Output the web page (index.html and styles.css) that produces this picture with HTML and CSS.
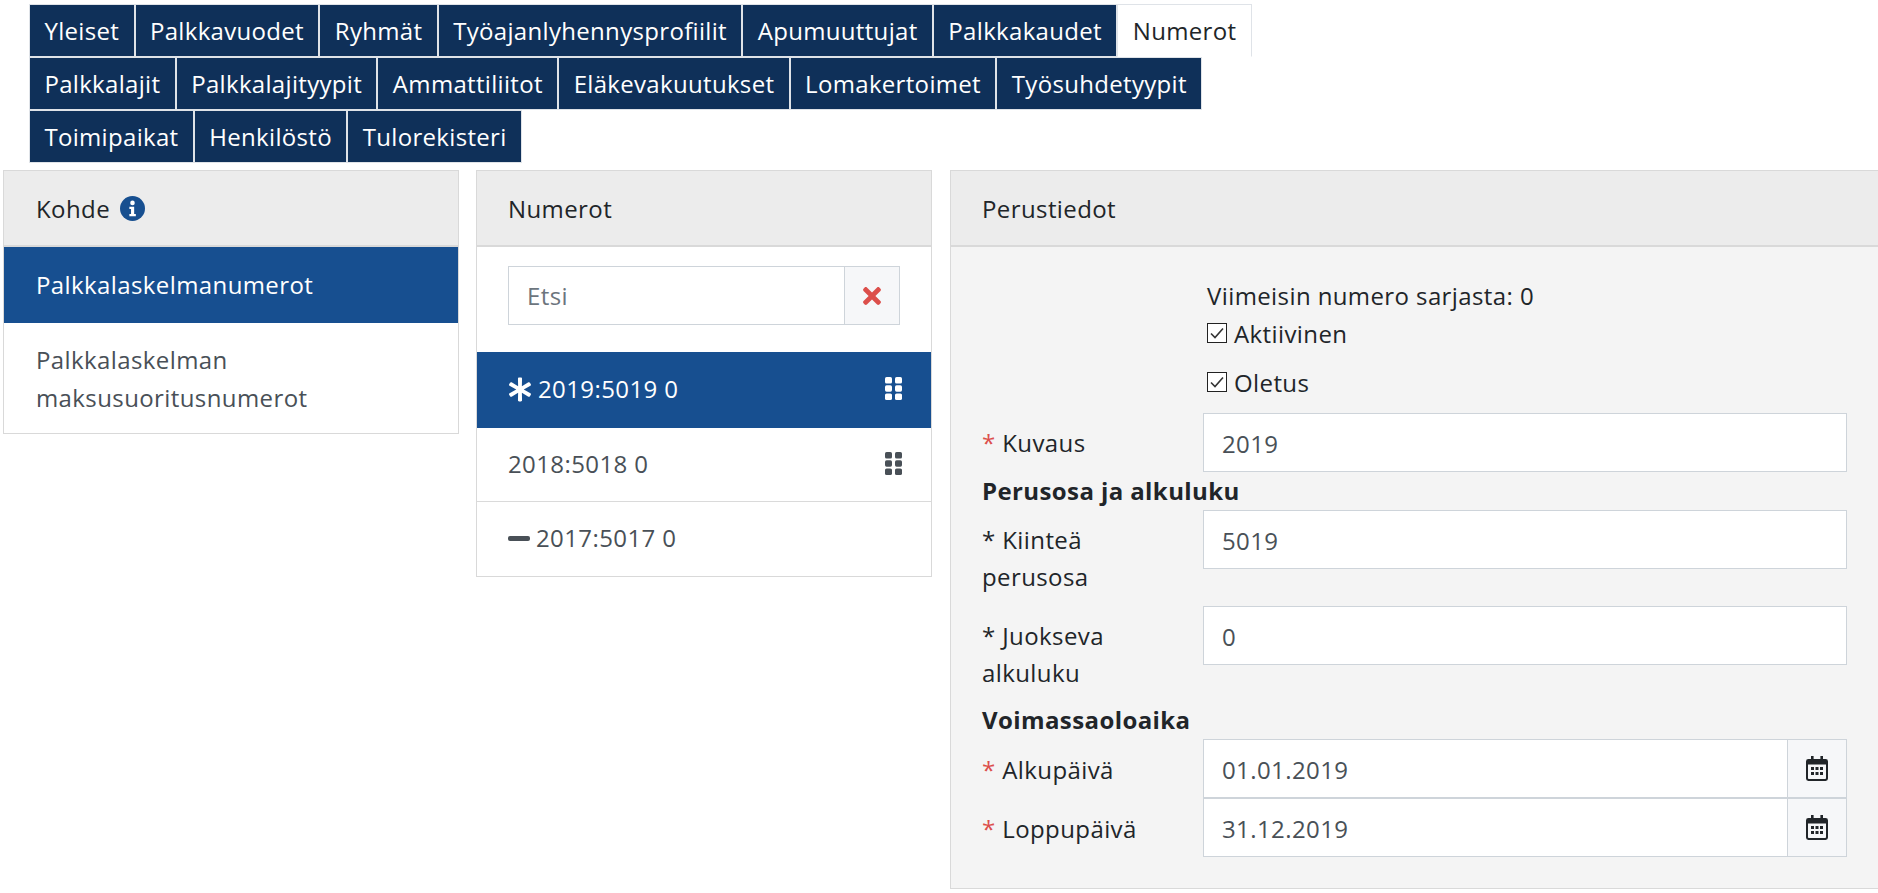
FILE: index.html
```html
<!DOCTYPE html>
<html lang="fi">
<head>
<meta charset="utf-8">
<title>Numerot</title>
<link rel="stylesheet" href="styles.css">
</head>
<body>
<nav class="tabs">
  <a class="tab">Yleiset</a><a class="tab">Palkkavuodet</a><a class="tab">Ryhmät</a><a class="tab">Työajanlyhennysprofiilit</a><a class="tab">Apumuuttujat</a><a class="tab">Palkkakaudet</a><a class="tab active">Numerot</a>
  <a class="tab">Palkkalajit</a><a class="tab">Palkkalajityypit</a><a class="tab">Ammattiliitot</a><a class="tab">Eläkevakuutukset</a><a class="tab">Lomakertoimet</a><a class="tab">Työsuhdetyypit</a>
  <a class="tab">Toimipaikat</a><a class="tab">Henkilöstö</a><a class="tab">Tulorekisteri</a>
</nav>
<main class="columns">
  <section class="panel panel-left">
    <header class="panel-head">Kohde
      <svg class="info" viewBox="0 0 24 24"><circle cx="12" cy="12" r="12" fill="#174f90"/><circle cx="12" cy="6.6" r="2.2" fill="#fff"/><path d="M9 10.2h4.600v7h1.600v2.300H9v-2.300h1.600v-4.700H9z" fill="#fff"/></svg>
    </header>
    <div class="item item-first active">Palkkalaskelmanumerot</div>
    <div class="item item-wrap">Palkkalaskelman maksusuoritusnumerot</div>
  </section>
  <section class="panel panel-mid">
    <header class="panel-head">Numerot</header>
    <div class="search">
      <input class="search-input" type="text" placeholder="Etsi">
      <span class="addon addon-search"><svg class="x" viewBox="0 0 352 512"><path fill="#dc4f4b" d="M242.72 256l100.07-100.07c12.28-12.28 12.28-32.19 0-44.48l-22.24-22.24c-12.28-12.28-32.19-12.28-44.48 0L176 189.28 75.93 89.21c-12.28-12.28-32.19-12.28-44.48 0L9.21 111.45c-12.28 12.28-12.28 32.19 0 44.48L109.28 256 9.21 356.07c-12.28 12.28-12.28 32.19 0 44.48l22.24 22.24c12.28 12.28 32.2 12.28 44.48 0L176 322.72l100.07 100.07c12.28 12.28 32.2 12.28 44.48 0l22.24-22.24c12.28-12.28 12.28-32.19 0-44.48L242.72 256z"/></svg></span>
    </div>
    <div class="row active">
      <svg class="star" viewBox="0 0 512 512"><path fill="#fff" d="M478.21 334.093L336 256l142.21-78.093c11.795-6.477 15.961-21.384 9.232-33.037l-19.48-33.741c-6.728-11.653-21.72-15.499-33.227-8.523L296 186.718l3.475-162.204C299.763 11.061 288.937 0 275.48 0h-38.96c-13.456 0-24.283 11.061-23.994 24.514L216 186.718 77.265 102.607c-11.506-6.976-26.499-3.13-33.227 8.523l-19.48 33.741c-6.728 11.653-2.562 26.56 9.233 33.037L176 256 33.79 334.093c-11.795 6.477-15.961 21.384-9.232 33.037l19.48 33.741c6.728 11.653 21.721 15.499 33.227 8.523L216 325.282l-3.475 162.204C212.237 500.939 223.064 512 236.52 512h38.961c13.456 0 24.283-11.061 23.995-24.514L296 325.282l138.735 84.111c11.506 6.976 26.499 3.13 33.227-8.523l19.48-33.741c6.728-11.653 2.563-26.559-9.232-33.036z"/></svg>
      <span class="row-text">2019:5019 0</span>
      <svg class="grip" viewBox="0 0 17 23"><g fill="#fff"><rect width="7" height="6.5" rx="1.6"/><rect x="10" width="7" height="6.5" rx="1.6"/><rect y="8.2" width="7" height="6.5" rx="1.6"/><rect x="10" y="8.2" width="7" height="6.5" rx="1.6"/><rect y="16.5" width="7" height="6.5" rx="1.6"/><rect x="10" y="16.5" width="7" height="6.5" rx="1.6"/></g></svg>
    </div>
    <div class="row row-line">
      <span class="row-text">2018:5018 0</span>
      <svg class="grip" viewBox="0 0 17 23"><g fill="#495057"><rect width="7" height="6.5" rx="1.6"/><rect x="10" width="7" height="6.5" rx="1.6"/><rect y="8.2" width="7" height="6.5" rx="1.6"/><rect x="10" y="8.2" width="7" height="6.5" rx="1.6"/><rect y="16.5" width="7" height="6.5" rx="1.6"/><rect x="10" y="16.5" width="7" height="6.5" rx="1.6"/></g></svg>
    </div>
    <div class="row">
      <span class="minus"></span>
      <span class="row-text">2017:5017 0</span>
    </div>
  </section>
  <section class="panel panel-right">
    <header class="panel-head">Perustiedot</header>
    <div class="form">
      <div class="field-only last-number">Viimeisin numero sarjasta: 0</div>
      <label class="field-only check check-one"><svg class="box" viewBox="0 0 20 20"><rect x=".5" y=".5" width="19" height="19" fill="#fff" stroke="#222"/><path d="M4 10.500l4 4 8-9" fill="none" stroke="#333" stroke-width="1.6"/></svg>Aktiivinen</label>
      <label class="field-only check check-two"><svg class="box" viewBox="0 0 20 20"><rect x=".5" y=".5" width="19" height="19" fill="#fff" stroke="#222"/><path d="M4 10.500l4 4 8-9" fill="none" stroke="#333" stroke-width="1.6"/></svg>Oletus</label>
      <div class="form-row row-kuvaus"><span class="label"><span class="req">*</span> Kuvaus</span><input class="input" type="text" value="2019"></div>
      <div class="section-title title-one">Perusosa ja alkuluku</div>
      <div class="form-row row-kiintea"><span class="label">* Kiinteä perusosa</span><input class="input" type="text" value="5019"></div>
      <div class="form-row row-juokseva"><span class="label">* Juokseva alkuluku</span><input class="input" type="text" value="0"></div>
      <div class="section-title title-two">Voimassaoloaika</div>
      <div class="form-row row-date"><span class="label"><span class="req">*</span> Alkupäivä</span><div class="group"><input class="input input-group" type="text" value="01.01.2019"><span class="addon addon-date"><svg class="cal" viewBox="0 0 22 25"><path fill="#212529" fill-rule="evenodd" d="M5 0h2.600v3h6.800V0H17v3h2.600A2.400 2.400 0 0 1 22 5.400v17.200a2.400 2.400 0 0 1-2.400 2.400H2.400A2.400 2.400 0 0 1 0 22.600V5.400A2.400 2.400 0 0 1 2.400 3H5zM2 8.500v13.700c0 .5.400.8.800.8h16.400c.4 0 .8-.3.800-.8V8.500zM5 11h3v3H5zm4.500 0h3v3h-3zM14 11h3v3h-3zM5 16h3v3H5zm4.500 0h3v3h-3zM14 16h3v3h-3z"/></svg></span></div></div>
      <div class="form-row row-date"><span class="label"><span class="req">*</span> Loppupäivä</span><div class="group"><input class="input input-group" type="text" value="31.12.2019"><span class="addon addon-date"><svg class="cal" viewBox="0 0 22 25"><path fill="#212529" fill-rule="evenodd" d="M5 0h2.600v3h6.800V0H17v3h2.600A2.400 2.400 0 0 1 22 5.400v17.200a2.400 2.400 0 0 1-2.400 2.400H2.400A2.400 2.400 0 0 1 0 22.600V5.400A2.400 2.400 0 0 1 2.400 3H5zM2 8.500v13.700c0 .5.400.8.800.8h16.400c.4 0 .8-.3.800-.8V8.500zM5 11h3v3H5zm4.500 0h3v3h-3zM14 11h3v3h-3zM5 16h3v3H5zm4.500 0h3v3h-3zM14 16h3v3h-3z"/></svg></span></div></div>
    </div>
  </section>
</main>
</body>
</html>
```
FILE: styles.css
```css
* { box-sizing: border-box; }
html, body { margin: 0; padding: 0; overflow: hidden; }
body {
  height: 893px;
  background: #fff;
  color: #212529;
  font-family: "Open Sans", "Liberation Sans", sans-serif;
  font-size: 24px;
  line-height: 36px;
  letter-spacing: .4px;
}
.tabs {
  display: flex;
  flex-wrap: wrap;
  width: 1300px;
  margin-left: 29px;
  padding-top: 4px;
}
.tab {
  height: 53px;
  padding: 8px 14.4px 0;
  background: #0f3059;
  border: 1px solid #dfe3e8;
  color: #fff;
  letter-spacing: .32px;
}
.tab.active {
  background: #fff;
  color: #212529;
  border-bottom-color: transparent;
}
.columns {
  display: flex;
  align-items: flex-start;
  margin-top: 7px;
  padding-left: 3px;
}
.panel {
  border: 1px solid #d9d9d9;
  background: #fff;
  flex: none;
}
.panel-left { width: 456px; }
.panel-mid { width: 456px; margin-left: 17px; height: 407px; }
.panel-right { width: 928px; margin-left: 18px; border-right: 0; background: #f4f4f4; }
.panel-head {
  height: 76px;
  padding: 20px 31px 0;
  background: #ececec;
  border-bottom: 2px solid #d9d9d9;
  display: flex;
  align-items: flex-start;
}
.panel-left .panel-head { padding-left: 32px; }
.info { width: 25px; height: 25px; margin: 5px 0 0 10px; flex: none; }
.item { padding: 20px 32px 0; color: #495057; }
.item-first { height: 76px; }
.item-wrap { height: 110px; padding-top: 18px; line-height: 38px; }
.active { background: #174f90; color: #fff; }
.search {
  display: flex;
  margin: 19px 31px 27px;
  height: 59px;
}
.search-input, .input {
  display: block;
  font: inherit;
  letter-spacing: inherit;
  color: #495057;
  border: 1px solid #ced4da;
  background: #fff;
  min-width: 0;
  outline: 0;
}
.search-input { flex: 1; border-right: 0; padding: 0 18px; }
.input { padding: 1px 18px 0; }
.search-input::placeholder { color: #6c757d; opacity: 1; }
.addon {
  flex: none;
  display: flex;
  align-items: center;
  justify-content: center;
  background: #f6f7f9;
  border: 1px solid #ced4da;
}
.addon-search { width: 56px; }
.x { width: 18px; height: 26px; }
.row {
  height: 74px;
  padding: 18px 29px 0 31px;
  display: flex;
  align-items: flex-start;
  color: #495057;
}
.row.active { height: 76px; padding-top: 19px; color: #fff; }
.row-line { border-bottom: 1px solid #dadada; }
.star { width: 24px; height: 25px; margin: 6px 6px 0 0; flex: none; }
.minus { width: 22px; height: 5px; background: #495057; border-radius: 2px; margin: 16px 6px 0 0; flex: none; }
.grip { width: 17px; height: 23px; margin: 6px 0 0 auto; flex: none; }
.form { padding: 31px; }
.field-only { margin-left: 225px; display: block; }
.last-number { height: 36px; }
.check { display: flex; height: 36px; }
.check-one { margin-top: 2px; }
.check-two { margin-top: 13px; }
.box { width: 20px; height: 20px; margin: 7px 7px 0 0; flex: none; }
.form-row { display: flex; align-items: flex-start; }
.label { flex: none; width: 221px; padding: 11px 50px 0 0; line-height: 37px; }
.req { color: #dc4f4b; }
.input { flex: 1; height: 59px; }
.row-kuvaus { margin-top: 12px; }
.row-kiintea { margin-top: 1px; height: 84px; }
.row-juokseva { margin-top: 12px; height: 84px; }
.section-title { font-weight: 700; height: 36px; }
.title-one { margin-top: 1px; }
.title-two { margin-top: 12px; margin-bottom: 1px; }
.row-date { height: 59px; }
.row-date .label { padding-top: 12px; }
.group { flex: 1; display: flex; height: 100%; }
.input-group { border-right: 0; height: 100%; }
.addon-date { width: 60px; }
.cal { width: 22px; height: 25px; }
```
